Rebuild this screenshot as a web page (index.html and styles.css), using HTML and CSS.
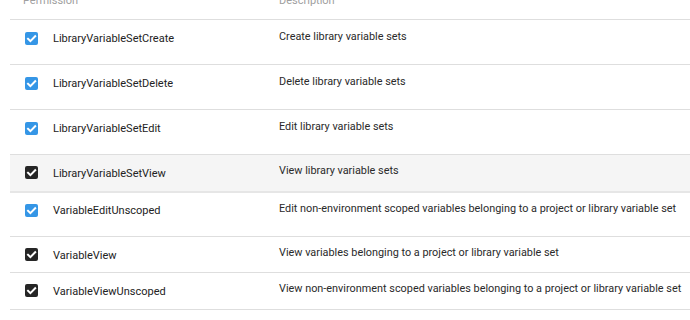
FILE: index.html
```html
<!DOCTYPE html>
<html>
<head>
<meta charset="utf-8">
<link rel="stylesheet" href="styles.css">
</head>
<body>
<div class="table">
  <div class="head">
    <div class="hcell hperm">Permission</div>
    <div class="hcell">Description</div>
  </div>
  <div class="row tall">
    <div class="perm"><span class="cb blue"><svg viewBox="0 0 13 13"><path d="M3 6.8 L5.4 9.1 L10.2 4.2" /></svg></span><span class="name">LibraryVariableSetCreate</span></div>
    <div class="desc">Create library variable sets</div>
  </div>
  <div class="row tall">
    <div class="perm"><span class="cb blue"><svg viewBox="0 0 13 13"><path d="M3 6.8 L5.4 9.1 L10.2 4.2" /></svg></span><span class="name">LibraryVariableSetDelete</span></div>
    <div class="desc">Delete library variable sets</div>
  </div>
  <div class="row tall">
    <div class="perm"><span class="cb blue"><svg viewBox="0 0 13 13"><path d="M3 6.8 L5.4 9.1 L10.2 4.2" /></svg></span><span class="name">LibraryVariableSetEdit</span></div>
    <div class="desc">Edit library variable sets</div>
  </div>
  <div class="row short hover">
    <div class="perm"><span class="cb dark"><svg viewBox="0 0 13 13"><path d="M3 6.8 L5.4 9.1 L10.2 4.2" /></svg></span><span class="name">LibraryVariableSetView</span></div>
    <div class="desc">View library variable sets</div>
  </div>
  <div class="row tall sep">
    <div class="perm"><span class="cb blue"><svg viewBox="0 0 13 13"><path d="M3 6.8 L5.4 9.1 L10.2 4.2" /></svg></span><span class="name">VariableEditUnscoped</span></div>
    <div class="desc">Edit non-environment scoped variables belonging to a project or library variable set</div>
  </div>
  <div class="row short2">
    <div class="perm"><span class="cb dark"><svg viewBox="0 0 13 13"><path d="M3 6.8 L5.4 9.1 L10.2 4.2" /></svg></span><span class="name">VariableView</span></div>
    <div class="desc">View variables belonging to a project or library variable set</div>
  </div>
  <div class="row short">
    <div class="perm"><span class="cb dark"><svg viewBox="0 0 13 13"><path d="M3 6.8 L5.4 9.1 L10.2 4.2" /></svg></span><span class="name">VariableViewUnscoped</span></div>
    <div class="desc">View non-environment scoped variables belonging to a project or library variable set</div>
  </div>
  <div class="row end"></div>
</div>
</body>
</html>
```
FILE: styles.css
```css
html, body {
  margin: 0;
  padding: 0;
  background: #ffffff;
}
body {
  font-family: Roboto, "Liberation Sans", sans-serif;
  font-size: 11px;
  color: #222222;
  overflow: hidden;
}
.table {
  margin-left: 10px;
}
.head {
  display: grid;
  grid-template-columns: 269px 1fr;
  height: 19px;
  color: #a0a0a0;
  line-height: 13px;
}
.hcell {
  margin-top: -6px;
}
.hperm {
  padding-left: 13px;
}
.row {
  display: grid;
  grid-template-columns: 269px 1fr;
  border-top: 1px solid #dedede;
  box-sizing: border-box;
}
.row.sep { border-top: 2px solid #e6e6e6; }
.row.tall { height: 45px; }
.row.short { height: 37px; }
.row.short2 { height: 36px; }
.row.hover { background: #f5f5f5; }
.row.end { height: 12px; }
.perm {
  display: flex;
  align-items: center;
  align-self: start;
  padding-top: 12px;
  padding-left: 15px;
  line-height: 13px;
}
.short .perm, .short2 .perm { padding-top: 11px; }
.short .name, .short2 .name { position: relative; top: 1px; }
.cb {
  width: 13px;
  height: 13px;
  border-radius: 2px;
  display: inline-flex;
  flex: none;
  margin-right: 15px;
}
.cb svg {
  width: 13px;
  height: 13px;
}
.cb path {
  fill: none;
  stroke: #ffffff;
  stroke-width: 2;
  stroke-linecap: square;
}
.cb.blue { background: #3596e6; }
.cb.dark { background: #262626; }
.name {
  color: #222222;
}
.desc {
  padding-top: 10px;
  line-height: 13px;
  font-size: 10.87px;
  color: #2a2a2a;
}
.sep .perm { padding-top: 11px; }
.sep .desc { padding-top: 9px; }
.short .desc, .short2 .desc { padding-top: 9px; }
```
